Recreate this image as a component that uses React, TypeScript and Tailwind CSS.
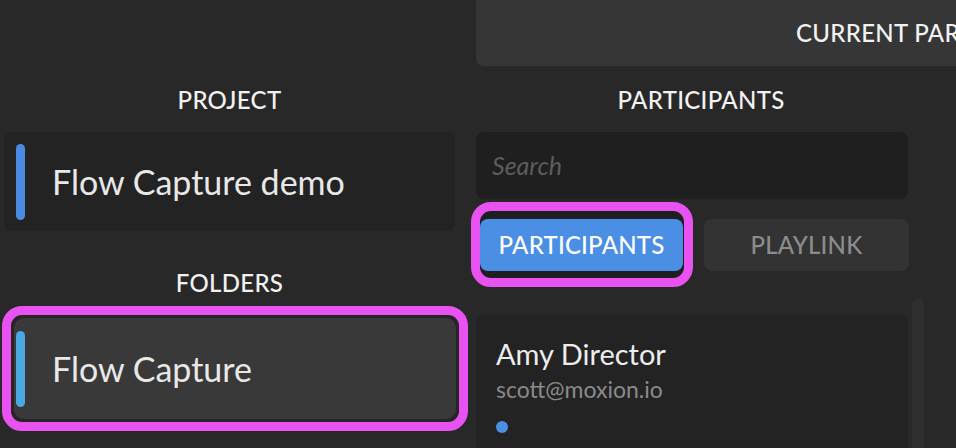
export default function App() {
  return (
    <div
      className="w-[956px] h-[448px] overflow-hidden bg-[#282828] flex text-[#f2f2f2]"
      style={{ fontFamily: 'Lato, "Noto Sans", sans-serif' }}
    >
      {/* Project / folders column */}
      <div className="w-[451px] ml-[4px] shrink-0 flex flex-col">
        <div className="h-[132px] shrink-0 flex items-end justify-center pb-[20px]">
          <span className="text-[24px] font-medium tracking-[0.3px] leading-none">PROJECT</span>
        </div>
        <div className="h-[99px] shrink-0 rounded-lg bg-[#232323] flex items-center pl-[12px]">
          <div className="w-[9px] h-[76px] rounded-full bg-[#4a8ae2]" />
          <span className="ml-[27px] text-[34px] leading-none text-[#e8e8e8]">Flow Capture demo</span>
        </div>
        <div className="h-[75px] shrink-0 flex items-end justify-center pb-[11px]">
          <span className="text-[24px] font-medium tracking-[0.3px] leading-none">FOLDERS</span>
        </div>
        <div className="-ml-[2px] w-[466px] h-[125px] shrink-0 rounded-[20px] border-[9px] border-[#e852f0] bg-[#242424] p-[1px]">
          <div className="h-full rounded-[12px] border-2 border-[#262626] bg-[#393939] flex items-center pl-[2px]">
            <div className="w-[9px] h-[76px] rounded-full bg-[#4aa9e0]" />
            <span className="ml-[27px] text-[34px] leading-none text-[#e8e8e8]">Flow Capture</span>
          </div>
        </div>
      </div>

      {/* Participants area */}
      <div className="ml-[21px] flex-1 flex flex-col min-h-0">
        <div className="w-[620px] h-[66px] shrink-0 rounded-b-lg bg-[#363636] flex items-center pl-[320px]">
          <span className="text-[24px] font-medium tracking-[0.3px] leading-none whitespace-nowrap">CURRENT PARTICIPANTS</span>
        </div>
        <div className="w-[450px] shrink-0 flex flex-col">
          <div className="h-[66px] shrink-0 flex items-end justify-center pb-[20px]">
            <span className="text-[24px] font-medium tracking-[0.3px] leading-none">PARTICIPANTS</span>
          </div>
          <div className="w-[432px] h-[67px] shrink-0 rounded-lg bg-[#1f1f1f] flex items-center pl-[16px]">
            <span className="text-[25px] italic text-[#5c5c5c] leading-none">Search</span>
          </div>
          <div className="mt-[3px] shrink-0 flex items-start">
            <div className="-ml-[5px] w-[222px] h-[85px] rounded-[20px] border-[9px] border-[#e852f0] bg-[#1f1f1f] pt-[8px] pr-[1px]">
              <div className="h-[52px] rounded-lg bg-[#4a8fe3] flex items-center justify-center">
                <span className="text-[24px] font-medium tracking-[0.2px] leading-none text-white">PARTICIPANTS</span>
              </div>
            </div>
            <div className="ml-[11px] mt-[17px] w-[205px] h-[52px] rounded-lg bg-[#333333] flex items-center justify-center">
              <span className="text-[24px] font-medium tracking-[0.2px] leading-none text-[#8c8c8c]">PLAYLINK</span>
            </div>
          </div>
          <div className="mt-[12px] shrink-0 flex items-start">
            <div className="mt-[16px] w-[432px] h-[160px] rounded-lg bg-[#232323] pl-[20px] pt-[24px] flex flex-col">
              <span className="text-[29px] leading-none text-[#ededed]">Amy Director</span>
              <span className="mt-[10px] text-[23px] leading-none text-[#8a8a8a]">scott@moxion.io</span>
              <div className="mt-[20px] w-[12px] h-[12px] rounded-full bg-[#4a8fe3]" />
            </div>
            <div className="ml-[4px] w-[12px] h-[200px] rounded-full bg-[#2f2f2f]" />
          </div>
        </div>
      </div>
    </div>
  );
}
